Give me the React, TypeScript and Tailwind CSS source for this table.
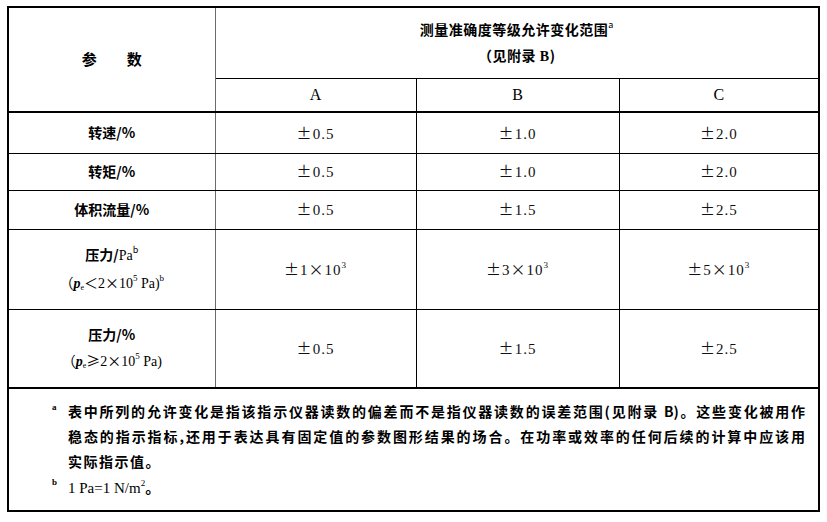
import React from "react";

// fonts: serif for numbers/latin, CJK bold for labels
const serif = "font-['Liberation_Serif','Noto_Sans_CJK_SC',serif]";
const cjk = "font-['Noto_Sans_CJK_SC','Liberation_Serif',sans-serif] font-bold";
const sym = "font-['Noto_Sans_CJK_SC',sans-serif] font-normal";

const cell = "border border-black p-0 text-center align-middle";
const firstCol = "border-r-[#6b6b6b]";

const Sup = ({ children }: { children: React.ReactNode }) => (
  <sup className="text-[9px] top-[-0.8em] font-normal">{children}</sup>
);

// wide symbols like in the scan (±, ×)
const S = ({ children }: { children: React.ReactNode }) => <span className={sym}>{children}</span>;

const Val = ({ children }: { children: React.ReactNode }) => (
  <span className={`${serif} text-[15px] tracking-[1px] text-[#111]`}>{children}</span>
);

interface Row {
  label: React.ReactNode;
  height: string;
  values: React.ReactNode[];
  last?: boolean;
}

const pm = (n: string) => (
  <>
    <S>±</S>
    {n}
  </>
);

const pow = (n: string) => (
  <>
    <S>±</S>
    {n}
    <S>×</S>10<Sup>3</Sup>
  </>
);

const rows: Row[] = [
  { label: "转速/%", height: "h-[41px]", values: [pm("0.5"), pm("1.0"), pm("2.0")] },
  { label: "转矩/%", height: "h-[37px]", values: [pm("0.5"), pm("1.0"), pm("2.0")] },
  { label: "体积流量/%", height: "h-[39px]", values: [pm("0.5"), pm("1.5"), pm("2.5")] },
  {
    label: (
      <div className="flex flex-col items-center gap-[4px] leading-[22px]">
        <span>
          压力/<span className={`${serif} font-normal`}>Pa</span>
          <Sup>b</Sup>
        </span>
        <span className={`${serif} font-normal text-[14px]`}>
          （<i className="font-bold">p</i>
          <sub className="text-[8px]">e</sub>
          <S>＜</S>2<S>×</S>10<Sup>5</Sup> Pa)<Sup>b</Sup>
        </span>
      </div>
    ),
    height: "h-[80px]",
    values: [pow("1"), pow("3"), pow("5")],
  },
  {
    label: (
      <div className="flex flex-col items-center gap-[4px] leading-[22px]">
        <span>压力/%</span>
        <span className={`${serif} font-normal text-[14px]`}>
          （<i className="font-bold">p</i>
          <sub className="text-[8px]">e</sub>
          <S>≥</S>2<S>×</S>10<Sup>5</Sup> Pa)
        </span>
      </div>
    ),
    height: "h-[79px]",
    values: [pm("0.5"), pm("1.5"), pm("2.5")],
    last: true,
  },
];

const App = () => {
  return (
    <div className="w-[827px] h-[522px] bg-white pt-[6px] pl-[7px] text-black">
      <table className="table-fixed border-collapse border-2 border-black w-[811px]">
        <colgroup>
          <col className="w-[207px]" />
          <col className="w-[201px]" />
          <col className="w-[203px]" />
          <col className="w-[200px]" />
        </colgroup>
        <tbody>
          {/* header */}
          <tr className="h-[71px]">
            <td rowSpan={2} className={`${cell} ${firstCol} border-b-2 ${cjk} text-[15px]`}>
              参{"\u3000\u3000"}数
            </td>
            <td colSpan={3} className={`${cell} ${cjk} text-[14px] tracking-[0.5px] leading-[26px]`}>
              <div>
                测量准确度等级允许变化范围<Sup>a</Sup>
              </div>
              <div>
                （见附录 <span className={`${serif}`}>B</span>)
              </div>
            </td>
          </tr>
          <tr className="h-[34px]">
            {["A", "B", "C"].map((c) => (
              <td key={c} className={`${cell} border-b-2 ${serif} text-[16px]`}>
                {c}
              </td>
            ))}
          </tr>

          {rows.map((r, i) => (
            <tr key={i} className={r.height}>
              <td className={`${cell} ${firstCol} ${r.last ? "border-b-2" : ""} ${cjk} text-[14px]`}>
                {r.label}
              </td>
              {r.values.map((v, j) => (
                <td key={j} className={`${cell} ${r.last ? "border-b-2" : ""}`}>
                  <Val>{v}</Val>
                </td>
              ))}
            </tr>
          ))}

          {/* footnotes */}
          <tr className="h-[123px]">
            <td colSpan={4} className={`${cell} text-left align-top pt-[10px] pl-[43px] pr-[13px] ${cjk} text-[14px] leading-[25px]`}>
              <div className="flex">
                <span className={`${serif} w-[16px] shrink-0 text-[9px] -mt-[4px]`}>a</span>
                <div className="flex-1">
                  <div className="text-justify [text-align-last:justify]">
                    表中所列的允许变化是指该指示仪器读数的偏差而不是指仪器读数的误差范围(见附录 B)。这些变化被用作
                  </div>
                  <div className="text-justify [text-align-last:justify]">
                    稳态的指示指标,还用于表达具有固定值的参数图形结果的场合。在功率或效率的任何后续的计算中应该用
                  </div>
                  <div className="tracking-[1.5px]">实际指示值。</div>
                </div>
              </div>
              <div className="flex">
                <span className={`${serif} w-[16px] shrink-0 text-[9px] -mt-[4px]`}>b</span>
                <span className={`${serif} font-normal text-[15px]`}>
                  1 Pa=1 N/m<Sup>2</Sup>
                  <span className={cjk}>。</span>
                </span>
              </div>
            </td>
          </tr>
        </tbody>
      </table>
    </div>
  );
};

export default App;
